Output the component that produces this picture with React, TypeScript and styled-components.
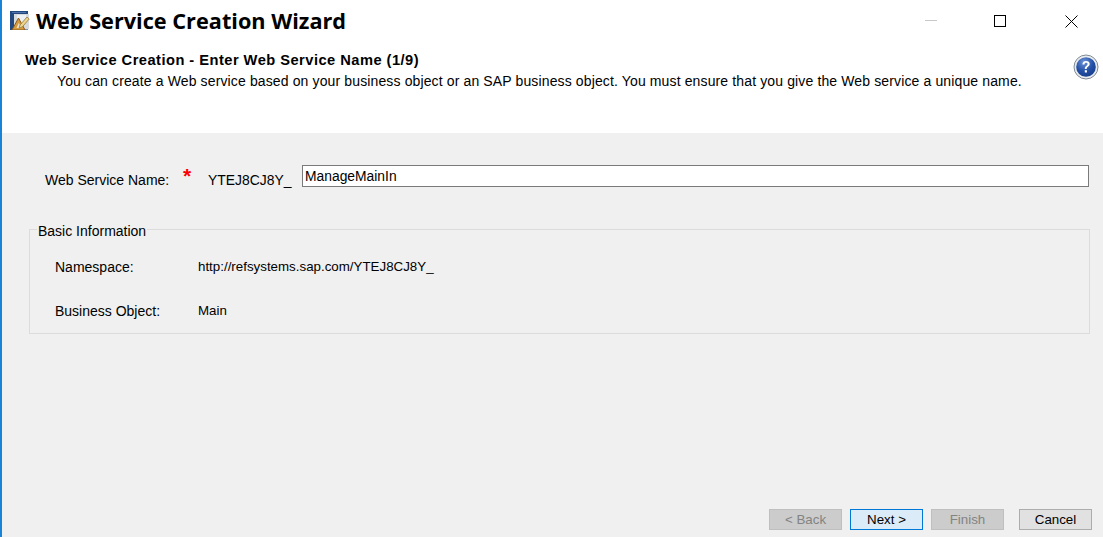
import styled, { createGlobalStyle } from "styled-components";

const GlobalStyle = createGlobalStyle`
  html, body {
    margin: 0;
    padding: 0;
    background: #f0f0f0;
  }
  body {
    font-family: "Liberation Sans", Arial, sans-serif;
    color: #000;
  }
`;

const Window = styled.div`
  width: 1103px;
  height: 537px;
  box-sizing: border-box;
  border-left: 2px solid #1883d7;
  display: flex;
  flex-direction: column;
  overflow: hidden;
  background: #f0f0f0;
`;

const Header = styled.header`
  height: 133px;
  flex: none;
  background: #fff;
  display: flex;
  flex-direction: column;
`;

const TitleBar = styled.div`
  height: 42px;
  display: flex;
  align-items: center;
  padding-left: 8px;
  gap: 6px;
`;

const Title = styled.h1`
  margin: 0;
  flex: 1;
  font-family: "Open Sans", sans-serif;
  font-size: 21.7px;
  font-weight: 700;
  line-height: 42px;
  letter-spacing: 0;
`;

const WindowControls = styled.div`
  display: flex;
  align-items: center;
  height: 42px;
  padding-right: 9px;
`;

const ControlButton = styled.div<{ $gap?: number }>`
  width: 46px;
  height: 42px;
  margin-right: ${(p) => p.$gap ?? 0}px;
  display: flex;
  align-items: center;
  justify-content: center;
`;

const IconSlot = styled.div`
  display: flex;
  margin-top: -2px;
`;

const Intro = styled.div`
  display: flex;
  padding-left: 23px;
  padding-right: 4px;
`;

const IntroText = styled.div`
  flex: 1;
  padding-top: 10px;
`;

const Heading = styled.div`
  font-size: 14.67px;
  font-weight: 700;
  line-height: 17px;
  letter-spacing: 0.47px;
`;

const Description = styled.div`
  font-size: 14px;
  line-height: 17px;
  padding-left: 32px;
  margin-top: 4px;
  letter-spacing: 0.13px;
`;

const HelpSlot = styled.div`
  margin-top: 12px;
  display: flex;
`;

const Content = styled.main`
  flex: 1;
  display: flex;
  flex-direction: column;
  padding: 32px 14px 0 27px;
`;

const NameRow = styled.div`
  display: flex;
  align-items: flex-start;
  height: 22px;
`;

const NameLabel = styled.span`
  font-size: 14px;
  margin: 7px 0 0 16px;
  width: 138px;
  line-height: 16px;
`;

const Required = styled.span`
  color: #f00;
  font-size: 21px;
  font-weight: 700;
  line-height: 21px;
  width: 25px;
`;

const Prefix = styled.span`
  font-size: 13.9px;
  margin-top: 7px;
  width: 94px;
  line-height: 16px;
`;

const NameInput = styled.input`
  flex: 1;
  min-width: 0;
  height: 22px;
  box-sizing: border-box;
  border: 1px solid #7a7a7a;
  background: #fff;
  padding: 0 2px 1px 2px;
  font-family: "Liberation Sans", Arial, sans-serif;
  font-size: 13.85px;
  color: #000;
  outline: none;
`;

const InfoGroup = styled.fieldset`
  margin: 31px -1px 0 0;
  padding: 0;
  height: 116px;
  box-sizing: border-box;
  border: 1px solid #dcdcdc;
  min-width: 0;
`;

const GroupTitle = styled.legend`
  font-size: 14px;
  padding: 5px 0 1px 1px;
  margin-left: 7px;
  line-height: 16px;
  width: 110px;
  box-sizing: border-box;
`;

const InfoGrid = styled.dl`
  margin: 0;
  padding: 19px 0 0 25px;
  display: grid;
  grid-template-columns: 143px 1fr;
  row-gap: 28px;
  line-height: 16px;
`;

const InfoLabel = styled.dt`
  font-size: 14px;
  margin: 0;
`;

const InfoValue = styled.dd`
  margin: 0;
  font-size: 13.33px;
`;

const Footer = styled.footer`
  height: 28px;
  flex: none;
  display: flex;
  justify-content: flex-end;
  align-items: flex-start;
  padding-right: 11px;
`;

const WizardButton = styled.button<{ $primary?: boolean; $spaced?: boolean }>`
  width: 73px;
  height: 21px;
  box-sizing: border-box;
  margin-left: ${(p) => (p.$spaced ? "15px" : "8px")};
  padding: 0;
  border: 1px solid ${(p) => (p.$primary ? "#0078d7" : "#adadad")};
  background: ${(p) => (p.$primary ? "#dbebf8" : "#e1e1e1")};
  color: #000;
  font-family: "Liberation Sans", Arial, sans-serif;
  font-size: 13.33px;
  line-height: 17px;

  &:disabled {
    background: #cccccc;
    border-color: #bfbfbf;
    color: #838383;
  }
`;

function WizardIcon() {
  return (
    <svg width="20" height="20" viewBox="1 0 20 20">
      <rect x="1" y="1" width="18" height="19" fill="#7f93b3" />
      <path d="M1 1h18v3H5v16H1z" fill="#23477f" />
      <path d="M3 2h14v1H3z" fill="#4f74ad" />
      <rect x="5" y="4" width="15" height="15" fill="#d8dbde" />
      <path d="M8 5h9v3l-4 5H8z" fill="#eef1f4" />
      <path d="M3 20L9.5 8 16 20z" fill="#d69a3e" stroke="#8a5a1c" strokeWidth="1" />
      <path d="M7.5 18l2.2-5 3 5z" fill="#eadfca" />
      <path d="M11 15l7-8 2.2 2-7 8-3 1z" fill="#efd48a" stroke="#8f7a3e" strokeWidth="0.8" />
    </svg>
  );
}

function HelpIcon() {
  return (
    <svg width="26" height="26" viewBox="0 0 26 26">
      <defs>
        <radialGradient id="helpFill" cx="40%" cy="25%" r="85%">
          <stop offset="0%" stopColor="#6d93d8" />
          <stop offset="55%" stopColor="#234fa5" />
          <stop offset="100%" stopColor="#163a86" />
        </radialGradient>
      </defs>
      <circle cx="13" cy="13" r="12" fill="#e8ecef" stroke="#7f8a96" strokeWidth="1" />
      <circle cx="13" cy="13" r="9.8" fill="url(#helpFill)" />
      <path
        d="M9.4 10.4c0-2.2 1.6-3.4 3.7-3.4 2.2 0 3.6 1.2 3.6 3 0 2.6-3 2.6-3 5h-1.9c0-3.2 2.8-3.2 2.8-4.9 0-.8-.6-1.3-1.5-1.3-1 0-1.6.6-1.7 1.6z"
        fill="#fff"
      />
      <rect x="11.8" y="16.2" width="2.1" height="2.3" fill="#fff" />
    </svg>
  );
}

export default function App() {
  return (
    <>
      <GlobalStyle />
      <Window>
        <Header>
          <TitleBar>
            <IconSlot>
              <WizardIcon />
            </IconSlot>
            <Title>Web Service Creation Wizard</Title>
            <WindowControls>
              <ControlButton $gap={23}>
                <svg width="12" height="12" viewBox="0 0 12 12">
                  <path d="M0 5.5h12" stroke="#c8c8c8" strokeWidth="1" />
                </svg>
              </ControlButton>
              <ControlButton $gap={25}>
                <svg width="12" height="12" viewBox="0 0 12 12">
                  <rect x="0.5" y="0.5" width="11" height="11" fill="none" stroke="#000" />
                </svg>
              </ControlButton>
              <ControlButton>
                <svg width="13" height="13" viewBox="0 0 13 13">
                  <path d="M0.5 0.5l12 12M12.5 0.5l-12 12" stroke="#000" strokeWidth="1" />
                </svg>
              </ControlButton>
            </WindowControls>
          </TitleBar>
          <Intro>
            <IntroText>
              <Heading>Web Service Creation - Enter Web Service Name (1/9)</Heading>
              <Description>
                You can create a Web service based on your business object or an SAP business
                object. You must ensure that you give the Web service a unique name.
              </Description>
            </IntroText>
            <HelpSlot>
              <HelpIcon />
            </HelpSlot>
          </Intro>
        </Header>
        <Content>
          <NameRow>
            <NameLabel>Web Service Name:</NameLabel>
            <Required>*</Required>
            <Prefix>YTEJ8CJ8Y_</Prefix>
            <NameInput defaultValue="ManageMainIn" />
          </NameRow>
          <InfoGroup>
            <GroupTitle>Basic Information</GroupTitle>
            <InfoGrid>
              <InfoLabel>Namespace:</InfoLabel>
              <InfoValue>http://refsystems.sap.com/YTEJ8CJ8Y_</InfoValue>
              <InfoLabel>Business Object:</InfoLabel>
              <InfoValue>Main</InfoValue>
            </InfoGrid>
          </InfoGroup>
        </Content>
        <Footer>
          <WizardButton disabled>&lt; Back</WizardButton>
          <WizardButton $primary>Next &gt;</WizardButton>
          <WizardButton disabled>Finish</WizardButton>
          <WizardButton $spaced>Cancel</WizardButton>
        </Footer>
      </Window>
    </>
  );
}
